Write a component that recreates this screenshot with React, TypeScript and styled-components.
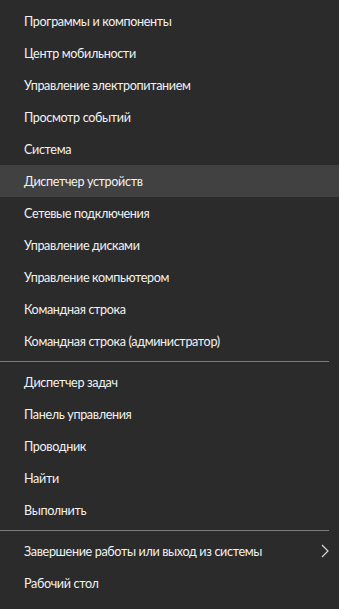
import React, { FC } from 'react';
import styled, { createGlobalStyle } from 'styled-components';

const GlobalStyle = createGlobalStyle`
  html, body {
    margin: 0;
    padding: 0;
    background: #2b2b2b;
  }
`;

const Menu = styled.ul`
  list-style: none;
  margin: 0;
  padding: 5px 0 10px;
  width: 339px;
  min-height: 609px;
  box-sizing: border-box;
  background: #2b2b2b;
  font-family: 'Lato', 'Noto Sans', sans-serif;
  font-size: 12.6px;
  letter-spacing: -0.35px;
  color: #f2f2f2;
`;

const Item = styled.li<{ active?: boolean }>`
  height: 32px;
  display: flex;
  align-items: center;
  justify-content: space-between;
  padding: 0 9px 0 24px;
  background: ${({ active }) => (active ? '#414141' : 'transparent')};
  cursor: default;
`;

const Separator = styled.li`
  height: 1px;
  margin: 4px 10px 4px 0;
  background: #7c7c7c;
`;

const Chevron = () => (
  <svg width="10" height="14" viewBox="0 0 10 14" fill="none">
    <path d="M2 1 L8 7 L2 13" stroke="#d8d8d8" strokeWidth="1.2" />
  </svg>
);

const groups: string[][] = [
  [
    'Программы и компоненты',
    'Центр мобильности',
    'Управление электропитанием',
    'Просмотр событий',
    'Система',
    'Диспетчер устройств',
    'Сетевые подключения',
    'Управление дисками',
    'Управление компьютером',
    'Командная строка',
    'Командная строка (администратор)',
  ],
  ['Диспетчер задач', 'Панель управления', 'Проводник', 'Найти', 'Выполнить'],
];

const App: FC = () => (
  <>
    <GlobalStyle />
    <Menu>
      {groups[0].map((label) => (
        <Item key={label} active={label === 'Диспетчер устройств'}>
          {label}
        </Item>
      ))}
      <Separator />
      {groups[1].map((label) => (
        <Item key={label}>{label}</Item>
      ))}
      <Separator />
      <Item>
        Завершение работы или выход из системы
        <Chevron />
      </Item>
      <Item>Рабочий стол</Item>
    </Menu>
  </>
);

export default App;
